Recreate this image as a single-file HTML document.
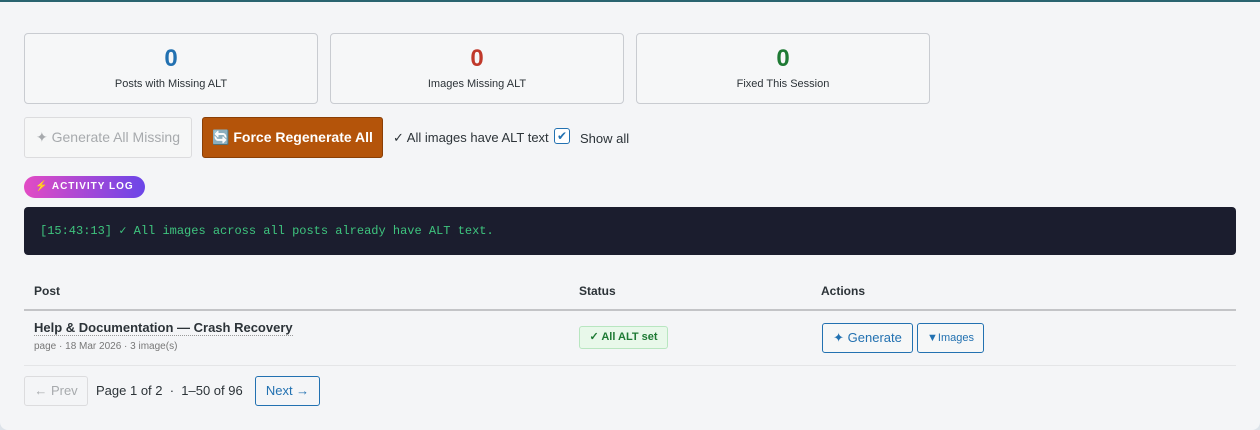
<!DOCTYPE html>
<html><head><style>
*{box-sizing:border-box;margin:0;padding:0}
body{width:1260px;height:430px;background:#dde3ea;font-family:"Liberation Sans",sans-serif;overflow:hidden;position:relative}
.wrap{position:absolute;left:0;top:0;width:1260px;height:430px;background:#f4f5f7;border-radius:0 0 8px 8px}
.card{position:absolute;top:33px;width:294px;height:71px;border:1px solid #c9ccd1;border-radius:4px;background:#f6f7f8;text-align:center}
.card b{display:block;font-size:24px;margin-top:12px;line-height:26px}
.card span{display:block;font-size:11px;color:#2c3338;margin-top:6px}
.btn{position:absolute;top:117px;height:41px;border-radius:3px;font-size:14px;line-height:39px;text-align:center}
.abs{position:absolute}
</style></head><body><div class="wrap">
<div class="abs" style="left:0;top:0;width:1260px;height:2px;background:#2a6470"></div>
<div class="card" style="left:24px"><b style="color:#2271b1">0</b><span>Posts with Missing ALT</span></div>
<div class="card" style="left:330px"><b style="color:#c0392b">0</b><span>Images Missing ALT</span></div>
<div class="card" style="left:636px"><b style="color:#1e7a34">0</b><span>Fixed This Session</span></div>
<div class="btn" style="left:24px;width:168px;border:1px solid #dcdcde;color:#a7aaad;background:#f6f7f7">✦ Generate All Missing</div>
<div class="btn" style="left:202px;width:181px;background:#b4540a;border:1px solid #8a3f06;color:#fff;font-weight:bold">🔄 Force Regenerate All</div>
<div class="abs" style="left:393px;top:130px;font-size:13px;color:#2c3338">✓ All images have ALT text</div>
<div class="abs" style="left:554px;top:128px;width:16px;height:16px;border:1px solid #2271b1;border-radius:3px;background:#fff;color:#2271b1;font-size:12px;line-height:14px;text-align:center">✔</div>
<div class="abs" style="left:580px;top:131px;font-size:13px;color:#2c3338">Show all</div>
<div class="abs" style="left:24px;top:176px;width:121px;height:22px;border-radius:11px;background:linear-gradient(90deg,#e24bc4,#6b46e8);color:#fff;font-size:10px;font-weight:bold;letter-spacing:1px;line-height:22px;padding-left:11px"><span style="color:#f6c04a">⚡</span> ACTIVITY LOG</div>
<div class="abs" style="left:24px;top:207px;width:1212px;height:48px;background:#1b1d2e;border-radius:4px;font-family:'Liberation Mono',monospace;font-size:12px;color:#3ec47e;padding:16px 0 0 16px">[15:43:13] ✓ All images across all posts already have ALT text.</div>
<div class="abs" style="left:24px;top:284px;width:1212px;font-size:12px;font-weight:bold;color:#2c3338">
<span class="abs" style="left:10px">Post</span><span class="abs" style="left:555px">Status</span><span class="abs" style="left:797px">Actions</span></div>
<div class="abs" style="left:24px;top:309px;width:1212px;height:2px;background:#c3c4c7"></div>
<div class="abs" style="left:34px;top:320px;font-size:13px;font-weight:bold;color:#2c3338;border-bottom:1px dotted #999">Help &amp; Documentation — Crash Recovery</div>
<div class="abs" style="left:34px;top:341px;font-size:10px;color:#777">page · 18 Mar 2026 · 3 image(s)</div>
<div class="abs" style="left:579px;top:326px;width:89px;height:23px;background:#e8f8ea;border:1px solid #b8e6c0;border-radius:3px;color:#1e7a34;font-size:11px;font-weight:bold;line-height:21px;text-align:center">✓ All ALT set</div>
<div class="abs" style="left:822px;top:323px;width:91px;height:30px;border:1px solid #2271b1;border-radius:3px;color:#2271b1;font-size:13px;line-height:28px;text-align:center;background:#f6f7f7">✦ Generate</div>
<div class="abs" style="left:917px;top:323px;width:67px;height:30px;border:1px solid #2271b1;border-radius:3px;color:#2271b1;font-size:11px;line-height:28px;text-align:center;background:#f6f7f7">▼Images</div>
<div class="abs" style="left:24px;top:365px;width:1212px;height:1px;background:#e4e5e7"></div>
<div class="abs" style="left:24px;top:376px;width:64px;height:30px;border:1px solid #dcdcde;border-radius:3px;color:#a7aaad;font-size:13px;line-height:28px;text-align:center">← Prev</div>
<div class="abs" style="left:96px;top:383px;font-size:13px;color:#2c3338">Page 1 of 2 &nbsp;· &nbsp;1–50 of 96</div>
<div class="abs" style="left:255px;top:376px;width:65px;height:30px;border:1px solid #2271b1;border-radius:3px;color:#2271b1;font-size:13px;line-height:28px;text-align:center">Next →</div>
</div></body></html>
